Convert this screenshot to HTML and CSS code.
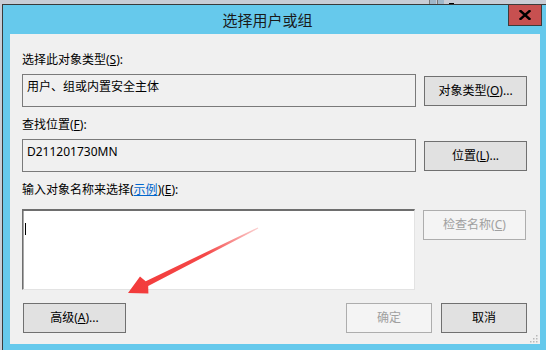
FILE: index.html
```html
<!DOCTYPE html>
<html lang="zh-CN">
<head>
<meta charset="utf-8">
<title>选择用户或组</title>
<link rel="stylesheet" href="styles.css">
</head>
<body>
<div class="desktop">
  <span class="tray-icon"></span><span class="tray-icon"></span><span class="tray-dash"></span>
</div>
<div class="window">
  <div class="titlebar">
    <div class="title">选择用户或组</div>
    <div class="close">
      <svg width="12" height="10" viewBox="0 0 12 10"><path d="M1.5 1 L10.5 9 M10.5 1 L1.5 9" stroke="#000" stroke-width="2.4" stroke-linecap="square"/></svg>
    </div>
  </div>
  <div class="content">
    <div class="label">选择此对象类型(<u>S</u>):</div>
    <div class="row">
      <div class="field">用户、组或内置安全主体</div>
      <div class="btn">对象类型(<u>O</u>)...</div>
    </div>
    <div class="label label-gap">查找位置(<u>F</u>):</div>
    <div class="row">
      <div class="field">D211201730MN</div>
      <div class="btn">位置(<u>L</u>)...</div>
    </div>
    <div class="label label-gap">输入对象名称来选择(<span class="link">示例</span>)(<u>E</u>):</div>
    <div class="row row-names">
      <div class="names"><span class="caret"></span></div>
      <div class="btn btn-disabled btn-check">检查名称(<u>C</u>)</div>
    </div>
    <div class="bottom">
      <div class="btn btn-adv">高级(<u>A</u>)...</div>
      <div class="spacer"></div>
      <div class="btn btn-small btn-disabled">确定</div>
      <div class="btn btn-small">取消</div>
    </div>
    <svg class="grip" width="9" height="9" viewBox="0 0 9 9">
      <g fill="#b8b8b8">
        <rect x="7" y="1" width="1.5" height="1.5"/>
        <rect x="4" y="4" width="1.5" height="1.5"/><rect x="7" y="4" width="1.5" height="1.5"/>
        <rect x="1" y="7" width="1.5" height="1.5"/><rect x="4" y="7" width="1.5" height="1.5"/><rect x="7" y="7" width="1.5" height="1.5"/>
      </g>
    </svg>
  </div>
</div>
<svg class="arrow" width="546" height="350" viewBox="0 0 546 350">
  <defs>
    <linearGradient id="ag" gradientUnits="userSpaceOnUse" x1="128" y1="293" x2="258" y2="228">
      <stop offset="0" stop-color="#f23a3a"/>
      <stop offset="0.6" stop-color="#f54848"/>
      <stop offset="1" stop-color="#fbd0d0"/>
    </linearGradient>
  </defs>
  <polygon points="128,293 140,276.5 145.7,281.2 257.8,227.4 258.3,228.6 148.2,286 148.4,293.5" fill="url(#ag)"/>
</svg>
</body>
</html>
```
FILE: styles.css
```css
html, body {
  margin: 0;
  padding: 0;
}
body {
  width: 546px;
  height: 350px;
  overflow: hidden;
  background: #c9cdd6;
  font-family: "Noto Sans", "Noto Sans CJK SC", sans-serif;
  font-size: 12px;
  color: #000;
  position: relative;
}
.desktop {
  height: 4px;
  display: flex;
  align-items: flex-start;
  padding-left: 429px;
  gap: 1px;
}
.tray-icon {
  width: 6px;
  height: 4px;
  background: #9fb6c8;
  border-left: 1px solid #777;
}
.tray-dash {
  width: 5px;
  height: 1px;
  margin: 3px 0 0 4px;
  background: #000;
}
.window {
  margin-left: 2px;
  width: 560px;
  height: 360px;
  border-top: 1px solid #3a3a3a;
  border-left: 1px solid #3a3a3a;
  background: #66c9ec;
  position: relative;
  padding-left: 7px;
  box-sizing: border-box;
}
.titlebar {
  height: 29px;
  display: flex;
  align-items: center;
  justify-content: center;
  padding-right: 37px;
}
.title {
  font-family: "Noto Sans CJK SC", sans-serif;
  font-size: 15px;
  color: #1a1a1a;
}
.close {
  position: absolute;
  left: 505px;
  top: -1px;
  width: 32px;
  height: 20px;
  background: #c75050;
  border: 1px solid #3c3c3c;
  display: flex;
  align-items: center;
  justify-content: center;
}
.content {
  width: 530px;
  height: 310px;
  background: #f0f0f0;
  box-sizing: border-box;
  padding: 18px 13px 0 12px;
  display: flex;
  flex-direction: column;
  position: relative;
}
.label {
  line-height: 16px;
  height: 16px;
  margin-bottom: 6px;
}
.label-gap {
  margin-top: 10px;
}
.row {
  display: flex;
  align-items: flex-start;
  gap: 8px;
}
.field {
  width: 394px;
  height: 33px;
  box-sizing: border-box;
  border: 1px solid #7a7a7a;
  padding: 4px 4px 0 4px;
  line-height: 16px;
}
.btn {
  box-sizing: border-box;
  width: 103px;
  height: 30px;
  margin-top: 2px;
  background: #e1e1e1;
  border: 1px solid #707070;
  display: flex;
  align-items: center;
  justify-content: center;
  line-height: 16px;
}
.btn-disabled {
  background: #f4f4f4;
  border-color: #adadad;
  color: #a0a0a0;
}
.row-names {
  margin-top: 5px;
}
.names {
  width: 393px;
  height: 81px;
  box-sizing: border-box;
  background: #fff;
  border-top: 2px solid #6e6e6e;
  border-left: 1px solid #6e6e6e;
  border-right: 1px solid #e3e3e3;
  border-bottom: 1px solid #e3e3e3;
  box-shadow: inset 1px 0 0 #a8a8a8;
  padding: 12px 0 0 2px;
}
.caret {
  display: block;
  width: 1px;
  height: 12px;
  background: #000;
}
.btn-check {
  margin-top: 1px;
}
.bottom {
  display: flex;
  margin-top: 13px;
  gap: 9px;
  padding-left: 1px;
}
.bottom .btn {
  margin-top: 0;
}
.spacer {
  flex: 1;
}
.btn-small {
  width: 86px;
}
.link {
  color: #0066cc;
  text-decoration: underline;
}
.grip {
  position: absolute;
  right: 2px;
  bottom: 1px;
}
.arrow {
  position: absolute;
  left: 0;
  top: 0;
  pointer-events: none;
}
```
